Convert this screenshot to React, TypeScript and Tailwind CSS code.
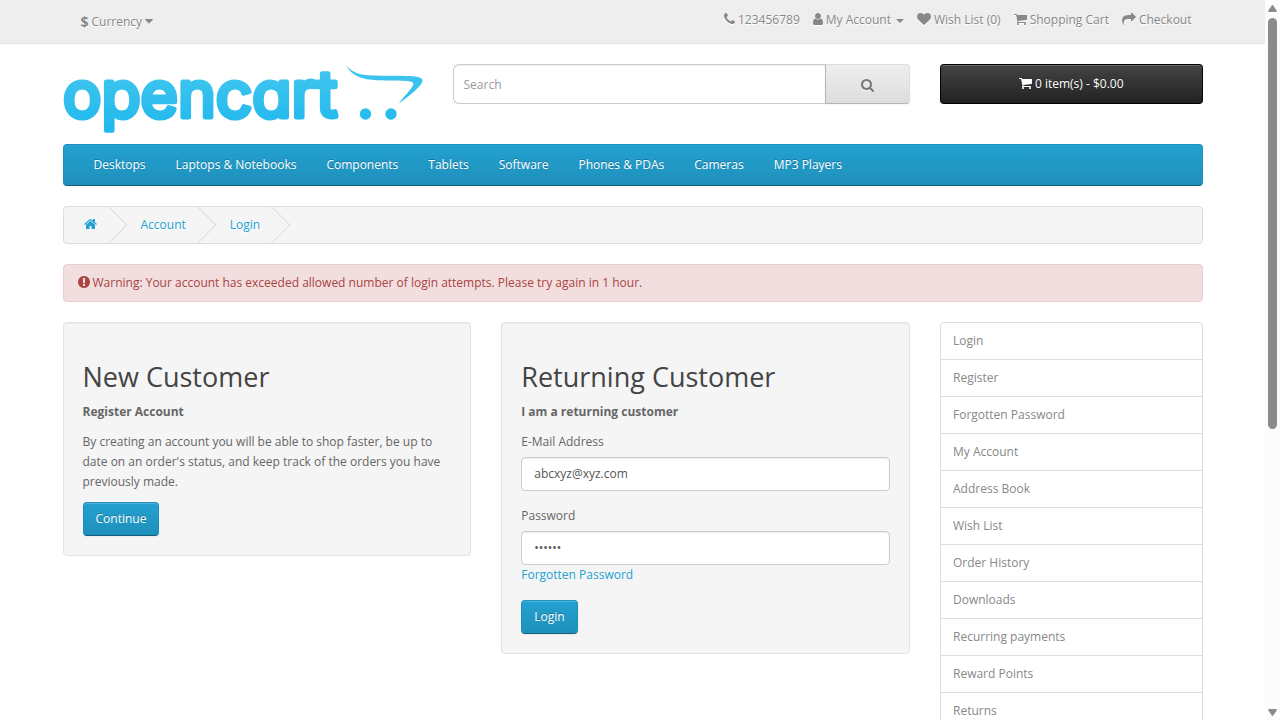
import React from "react";

type IconName =
  | "phone"
  | "user"
  | "heart"
  | "cart"
  | "share"
  | "search"
  | "home"
  | "warning"
  | "caret";

const ICONS: Record<IconName, { width: number; path: string }> = {
  phone: {
    width: 11,
    path: "M1600 1240q0 27-10 70.5t-21 68.5q-21 50-122 106-94 51-186 51-27 0-53-3.5t-57.5-12.5-47-14.5-55.5-20.5-49-18q-98-35-175-83-127-79-264-216t-216-264q-48-77-83-175-3-9-18-49t-20.5-55.5-14.5-47-12.5-57.5-3.5-53q0-92 51-186 56-101 106-122 25-11 68.5-21t70.5-10q14 0 21 3 18 6 53 76 11 19 30 54t35 63.5 31 53.5q3 4 17.5 25t21.5 35.5 7 28.5q0 20-28.5 50t-62 55-62 53-28.5 46q0 9 5 22.5t8.5 20.5 14 24 11.5 19q76 137 174 235t235 174q2 1 19 11.5t24 14 20.5 8.5 22.5 5q18 0 46-28.5t53-62 55-62 50-28.5q14 0 28.5 7t35.5 21.5 25 17.5q25 15 53.5 31t63.5 35 54 30q70 35 76 53 3 7 3 21z",
  },
  user: {
    width: 10,
    path: "M1536 1399q0 109-62.5 187t-150.5 78h-854q-88 0-150.5-78t-62.5-187q0-85 8.5-160.5t31.5-152 58.5-131 94-89 134.5-34.5q131 128 313 128t313-128q76 0 134.5 34.5t94 89 58.5 131 31.5 152 8.5 160.5zm-256-887q0 159-112.5 271.5t-271.5 112.5-271.5-112.5-112.5-271.5 112.5-271.5 271.5-112.5 271.5 112.5 112.5 271.5z",
  },
  heart: {
    width: 14,
    path: "M896 1664q-26 0-44-18l-624-602q-10-8-27.5-26t-55.5-65.5-68-97.5-53.5-121-23.5-138q0-220 127-344t351-124q62 0 126.5 21.5t120 58 95.5 68.5 76 68q36-36 76-68t95.5-68.5 120-58 126.5-21.5q224 0 351 124t127 344q0 221-229 450l-623 600q-18 18-44 18z",
  },
  cart: {
    width: 13,
    path: "M704 1536q0 52-38 90t-90 38-90-38-38-90 38-90 90-38 90 38 38 90zm896 0q0 52-38 90t-90 38-90-38-38-90 38-90 90-38 90 38 38 90zm128-1088v512q0 24-16.5 42.5t-40.5 21.5l-1044 122q13 60 13 70 0 16-24 64h920q26 0 45 19t19 45-19 45-45 19h-1024q-26 0-45-19t-19-45q0-11 8-31.5t16-36 21.5-40 15.5-29.5l-177-823h-204q-26 0-45-19t-19-45 19-45 45-19h256q16 0 28.5 6.5t19.5 15.5 13 24.5 8 26 5.5 29.5 4.5 26h1201q26 0 45 19t19 45z",
  },
  share: {
    width: 14,
    path: "M1792 640q0 26-19 45l-512 512q-19 19-45 19t-45-19-19-45v-256h-224q-98 0-175.5 6t-154 21.5-133 42.5-105.5 69.5-80 101-48.5 138.5-17.5 181q0 55 5 123 0 6 2.5 23.5t2.5 26.5q0 15-8.5 25t-23.5 10q-16 0-28-17-7-9-13-22t-13.5-30-10.5-24q-127-285-127-451 0-199 53-333 162-403 875-403h224v-256q0-26 19-45t45-19 45 19l512 512q19 19 19 45z",
  },
  search: {
    width: 13,
    path: "M1216 832q0-185-131.5-316.5t-316.5-131.5-316.5 131.5-131.5 316.5 131.5 316.5 316.5 131.5 316.5-131.5 131.5-316.5zm512 832q0 52-38 90t-90 38q-54 0-90-38l-343-342q-179 124-399 124-143 0-273.5-55.5t-225-150-150-225-55.5-273.5 55.5-273.5 150-225 225-150 273.5-55.5 273.5 55.5 225 150 150 225 55.5 273.5q0 220-124 399l343 343q37 37 37 90z",
  },
  home: {
    width: 13,
    path: "M1472 992v480q0 26-19 45t-45 19h-384v-384h-256v384h-384q-26 0-45-19t-19-45v-480q0-1 .5-3t.5-3l575-474 575 474q1 2 1 6zm223-69l-62 74q-8 9-21 11h-3q-13 0-21-7l-692-577-692 577q-12 8-24 7-13-2-21-11l-62-74q-8-10-7-23.5t11-21.5l719-599q32-26 76-26t76 26l244 204v-195q0-14 9-23t23-9h192q14 0 23 9t9 23v408l219 182q10 8 11 21.5t-7 23.5z",
  },
  warning: {
    width: 12,
    path: "M896 128q209 0 385.5 103t279.5 279.5 103 385.5-103 385.5-279.5 279.5-385.5 103-385.5-103-279.5-279.5-103-385.5 103-385.5 279.5-279.5 385.5-103zm128 1247v-190q0-14-9-23.5t-22-9.5h-192q-13 0-23 10t-10 23v190q0 13 10 23t23 10h192q13 0 22-9.5t9-23.5zm-2-344l18-621q0-12-10-18-10-8-24-8h-220q-14 0-24 8-10 6-10 18l18 621q0 10 10 17.5t24 7.5h185q14 0 23.5-7.5t10.5-17.5z",
  },
  caret: {
    width: 8,
    path: "M1408 704q0 26-19 45l-448 448q-19 19-45 19t-45-19l-448-448q-19-19-19-45t19-45 45-19h896q26 0 45 19t19 45z",
  },
};

function Icon({ name, className = "" }: { name: IconName; className?: string }) {
  const { width, path } = ICONS[name];
  const units = width * 128;
  return (
    <svg
      aria-hidden="true"
      width={width}
      height={14}
      viewBox={`${(1792 - units) / 2} 0 ${units} 1792`}
      fill="currentColor"
      className={`shrink-0 overflow-visible ${className}`}
    >
      <path d={path} />
    </svg>
  );
}

function Logo() {
  return (
    <svg viewBox="0 0 360 70" className="block w-full max-w-[360px] overflow-visible" role="img" aria-label="opencart">
      <defs>
        <linearGradient id="logo-blue" gradientUnits="userSpaceOnUse" x1="0" y1="4" x2="0" y2="66">
          <stop offset="0" stopColor="#41c6ee" />
          <stop offset="1" stopColor="#21b8ee" />
        </linearGradient>
      </defs>
      <text
        x="0"
        y="53"
        fontSize="64"
        fill="url(#logo-blue)"
        stroke="url(#logo-blue)"
        strokeWidth="5"
        strokeLinejoin="round"
        className="font-['Inter',sans-serif] [font-feature-settings:'cv11']"
      >
        opencart
      </text>
      <g fill="url(#logo-blue)">
        <path d="M282.500 0.500C288 8 296 10.800 306 11.300C322 12.100 340 11.600 352 12.400C358 12.900 360.500 15 359 18.500C356 25 344 33 336 39.500C340 33 347 27 350 21.500C351.500 18.500 349 17.200 344 16.900C331 16.200 316 17.200 304 15.200C293 13.300 287 8.500 282.500 0.500Z" />
        <circle cx="302.500" cy="50" r="5.700" />
        <circle cx="328" cy="50" r="5.700" />
      </g>
    </svg>
  );
}

function TopLink({ icon, children }: { icon: IconName; children: React.ReactNode }) {
  return (
    <li>
      <a href="#" className="flex items-center gap-[3px]">
        <Icon name={icon} className="mb-[2px] drop-shadow-[0_1px_0_#fff]" />
        {children}
      </a>
    </li>
  );
}

function TopBar() {
  return (
    <nav aria-label="Account" className="border-b border-[#e2e2e2] bg-[#eee] text-[#888] [text-shadow:0_1px_0_#fff]">
      <div className="mx-auto flex h-[43px] max-w-[1170px] items-start justify-between px-[15px]">
        <button type="button" className="mt-3 ml-[18px] flex items-center gap-[3px] leading-5 [text-shadow:0_1px_0_#fff]">
          <strong className="text-sm leading-5">$</strong>
          <span className="flex items-center gap-[3px]">
            Currency
            <Icon name="caret" className="mb-[2px]" />
          </span>
        </button>
        <ul className="mt-[10px] mr-[11px] flex gap-[13px]">
          <TopLink icon="phone">123456789</TopLink>
          <TopLink icon="user">
            My Account
            <svg aria-hidden="true" width="8" height="4" viewBox="0 0 8 4" fill="currentColor" className="mt-px ml-[2px]">
              <path d="M0 0h8L4 4z" />
            </svg>
          </TopLink>
          <TopLink icon="heart">Wish List (0)</TopLink>
          <TopLink icon="cart">Shopping Cart</TopLink>
          <TopLink icon="share">Checkout</TopLink>
        </ul>
      </div>
    </nav>
  );
}

function Header() {
  return (
    <header className="grid grid-cols-12 gap-x-[30px] pt-5">
      <a href="#" className="col-span-4">
        <Logo />
      </a>
      <form className="col-span-5 flex h-10" onSubmit={(e) => e.preventDefault()}>
        <input
          type="text"
          aria-label="Search"
          placeholder="Search"
          className="min-w-0 flex-1 rounded-l-md border border-r-0 border-[#ccc] bg-white px-[10px] pt-[2px] shadow-[inset_0_1px_1px_rgba(0,0,0,0.075)] outline-none placeholder:text-[#999]"
        />
        <button
          type="button"
          aria-label="Search"
          className="flex w-[85px] items-center justify-center rounded-r border border-[#ddd] border-b-[#b3b3b3] border-l-[#b7b7b7] bg-linear-to-b from-[#eee] to-[#ddd] pt-[2px] text-[#777] shadow-[0_1px_2px_rgba(0,0,0,0.05)]"
        >
          <Icon name="search" className="drop-shadow-[0_1px_0_rgba(255,255,255,0.5)]" />
        </button>
      </form>
      <button
        type="button"
        className="col-span-3 flex h-10 items-center justify-center gap-[3px] rounded border border-[#040404] border-b-black bg-linear-to-b from-[#444] to-[#222] text-white shadow-[inset_0_1px_0_rgba(255,255,255,0.2)] [text-shadow:0_-1px_0_rgba(0,0,0,0.25)]"
      >
        <Icon name="cart" className="mb-[2px]" />
        0 item(s) - $0.00
      </button>
    </header>
  );
}

const CATEGORIES = [
  "Desktops",
  "Laptops & Notebooks",
  "Components",
  "Tablets",
  "Software",
  "Phones & PDAs",
  "Cameras",
  "MP3 Players",
];

function Menu() {
  return (
    <nav
      aria-label="Categories"
      className="mt-[10px] rounded border border-[#1f90bb] border-b-[#145e7a] bg-linear-to-b from-[#23a1d1] to-[#1f90bb] px-[15px]"
    >
      <ul className="flex">
        {CATEGORIES.map((name) => (
          <li key={name}>
            <a href="#" className="block px-[15px] py-[10px] text-white [text-shadow:0_-1px_0_rgba(0,0,0,0.25)]">
              {name}
            </a>
          </li>
        ))}
      </ul>
    </nav>
  );
}

function Breadcrumb() {
  const items: { key: string; content: React.ReactNode }[] = [
    { key: "Home", content: <Icon name="home" className="mb-[2px]" /> },
    { key: "Account", content: "Account" },
    { key: "Login", content: "Login" },
  ];
  return (
    <ol
      aria-label="Breadcrumb"
      className="mt-5 flex gap-1 overflow-hidden rounded border border-[#ddd] bg-[#f5f5f5] py-2"
    >
      {items.map(({ key, content }) => (
        <li key={key} className="relative px-5 [text-shadow:0_1px_0_#fff]">
          <a href="#" aria-label={key} className="flex h-5 items-center text-[#23a1d1]">
            {content}
          </a>
          <span className="absolute -top-[3px] -right-[5px] size-[26px] rotate-45 border-t border-r border-[#ddd]" />
        </li>
      ))}
    </ol>
  );
}

const primaryButton =
  "rounded border border-[#1f90bb] border-b-[#145e7a] bg-linear-to-b from-[#23a1d1] to-[#1f90bb] px-3 py-[6px] text-white shadow-[inset_0_1px_0_rgba(255,255,255,0.2),0_1px_2px_rgba(0,0,0,0.05)] [text-shadow:0_-1px_0_rgba(0,0,0,0.25)]";

const card =
  "rounded border border-[#e3e3e3] bg-[#f5f5f5] px-[19px] pt-[39px] pb-[19px] shadow-[inset_0_1px_1px_rgba(0,0,0,0.05)]";

const field =
  "mt-[5px] block w-full rounded border border-[#ccc] bg-white px-3 py-[6px] text-[#555] shadow-[inset_0_1px_1px_rgba(0,0,0,0.075)] outline-none";

function NewCustomer() {
  return (
    <section className={card}>
      <h2 className="text-[27px] leading-[30px] text-[#444]">New Customer</h2>
      <p className="mt-[10px] font-bold">Register Account</p>
      <p className="mt-[10px]">
        By creating an account you will be able to shop faster, be up to date on an order's status, and keep
        track of the orders you have previously made.
      </p>
      <a href="#" className={`mt-[10px] inline-block ${primaryButton}`}>
        Continue
      </a>
    </section>
  );
}

function ReturningCustomer() {
  return (
    <section className={card}>
      <h2 className="text-[27px] leading-[30px] text-[#444]">Returning Customer</h2>
      <p className="mt-[10px] font-bold">I am a returning customer</p>
      <form className="mt-[10px]" onSubmit={(e) => e.preventDefault()}>
        <label htmlFor="email" className="block">
          E-Mail Address
        </label>
        <input id="email" type="text" defaultValue="abcxyz@xyz.com" className={field} />
        <label htmlFor="password" className="mt-[15px] block">
          Password
        </label>
        <input id="password" type="password" defaultValue="abc123" className={field} />
        <a href="#" className="block text-[#23a1d1]">
          Forgotten Password
        </a>
        <button type="submit" className={`mt-[15px] block ${primaryButton}`}>
          Login
        </button>
      </form>
    </section>
  );
}

const ACCOUNT_LINKS = [
  "Login",
  "Register",
  "Forgotten Password",
  "My Account",
  "Address Book",
  "Wish List",
  "Order History",
  "Downloads",
  "Recurring payments",
  "Reward Points",
  "Returns",
];

function Sidebar() {
  return (
    <aside className="col-span-3">
      <ul className="divide-y divide-[#ddd] rounded border border-[#ddd]">
        {ACCOUNT_LINKS.map((name) => (
          <li key={name}>
            <a href="#" className="block px-3 py-2 text-[#888]">
              {name}
            </a>
          </li>
        ))}
      </ul>
    </aside>
  );
}

function Scrollbar() {
  return (
    <div aria-hidden="true" className="flex w-[15px] shrink-0 flex-col items-center bg-[#fcfcfc] pt-[5px] pb-[4px] text-[#8b8b8b]">
      <svg width="9" height="7" viewBox="0 0 10 7" preserveAspectRatio="none" fill="currentColor" className="shrink-0">
        <path d="M4.200 0.500Q5 -0.400 5.800 0.500L9.600 5.500Q10 7 8.800 7H1.200Q0 7 0.400 5.500Z" />
      </svg>
      <div className="mt-[6px] flex-1">
        <div className="h-[411px] w-[9px] rounded-full bg-[#8b8b8b]" />
      </div>
      <svg width="9" height="7" viewBox="0 0 10 7" preserveAspectRatio="none" fill="currentColor" className="shrink-0">
        <path d="M4.200 6.500Q5 7.400 5.800 6.500L9.600 1.500Q10 0 8.800 0H1.200Q0 0 0.400 1.500Z" />
      </svg>
    </div>
  );
}

export default function App() {
  return (
    <div className="flex h-screen bg-white font-['Open_Sans',sans-serif] text-xs leading-5 text-[#666]">
      <div className="min-w-0 flex-1 overflow-hidden">
        <TopBar />
        <div className="mx-auto max-w-[1170px] px-[15px]">
          <Header />
          <Menu />
          <Breadcrumb />
          <p role="alert" className="mt-5 flex items-center gap-[3px] rounded border border-[#ebccd1] bg-[#f2dede] px-[14px] py-2 text-[#a94442]">
            <Icon name="warning" className="mb-[2px]" />
            Warning: Your account has exceeded allowed number of login attempts. Please try again in 1 hour.
          </p>
          <main className="mt-5 grid grid-cols-12 gap-x-[30px]">
            <div className="col-span-9 grid grid-cols-2 items-start gap-x-[30px]">
              <NewCustomer />
              <ReturningCustomer />
            </div>
            <Sidebar />
          </main>
        </div>
      </div>
      <Scrollbar />
    </div>
  );
}
